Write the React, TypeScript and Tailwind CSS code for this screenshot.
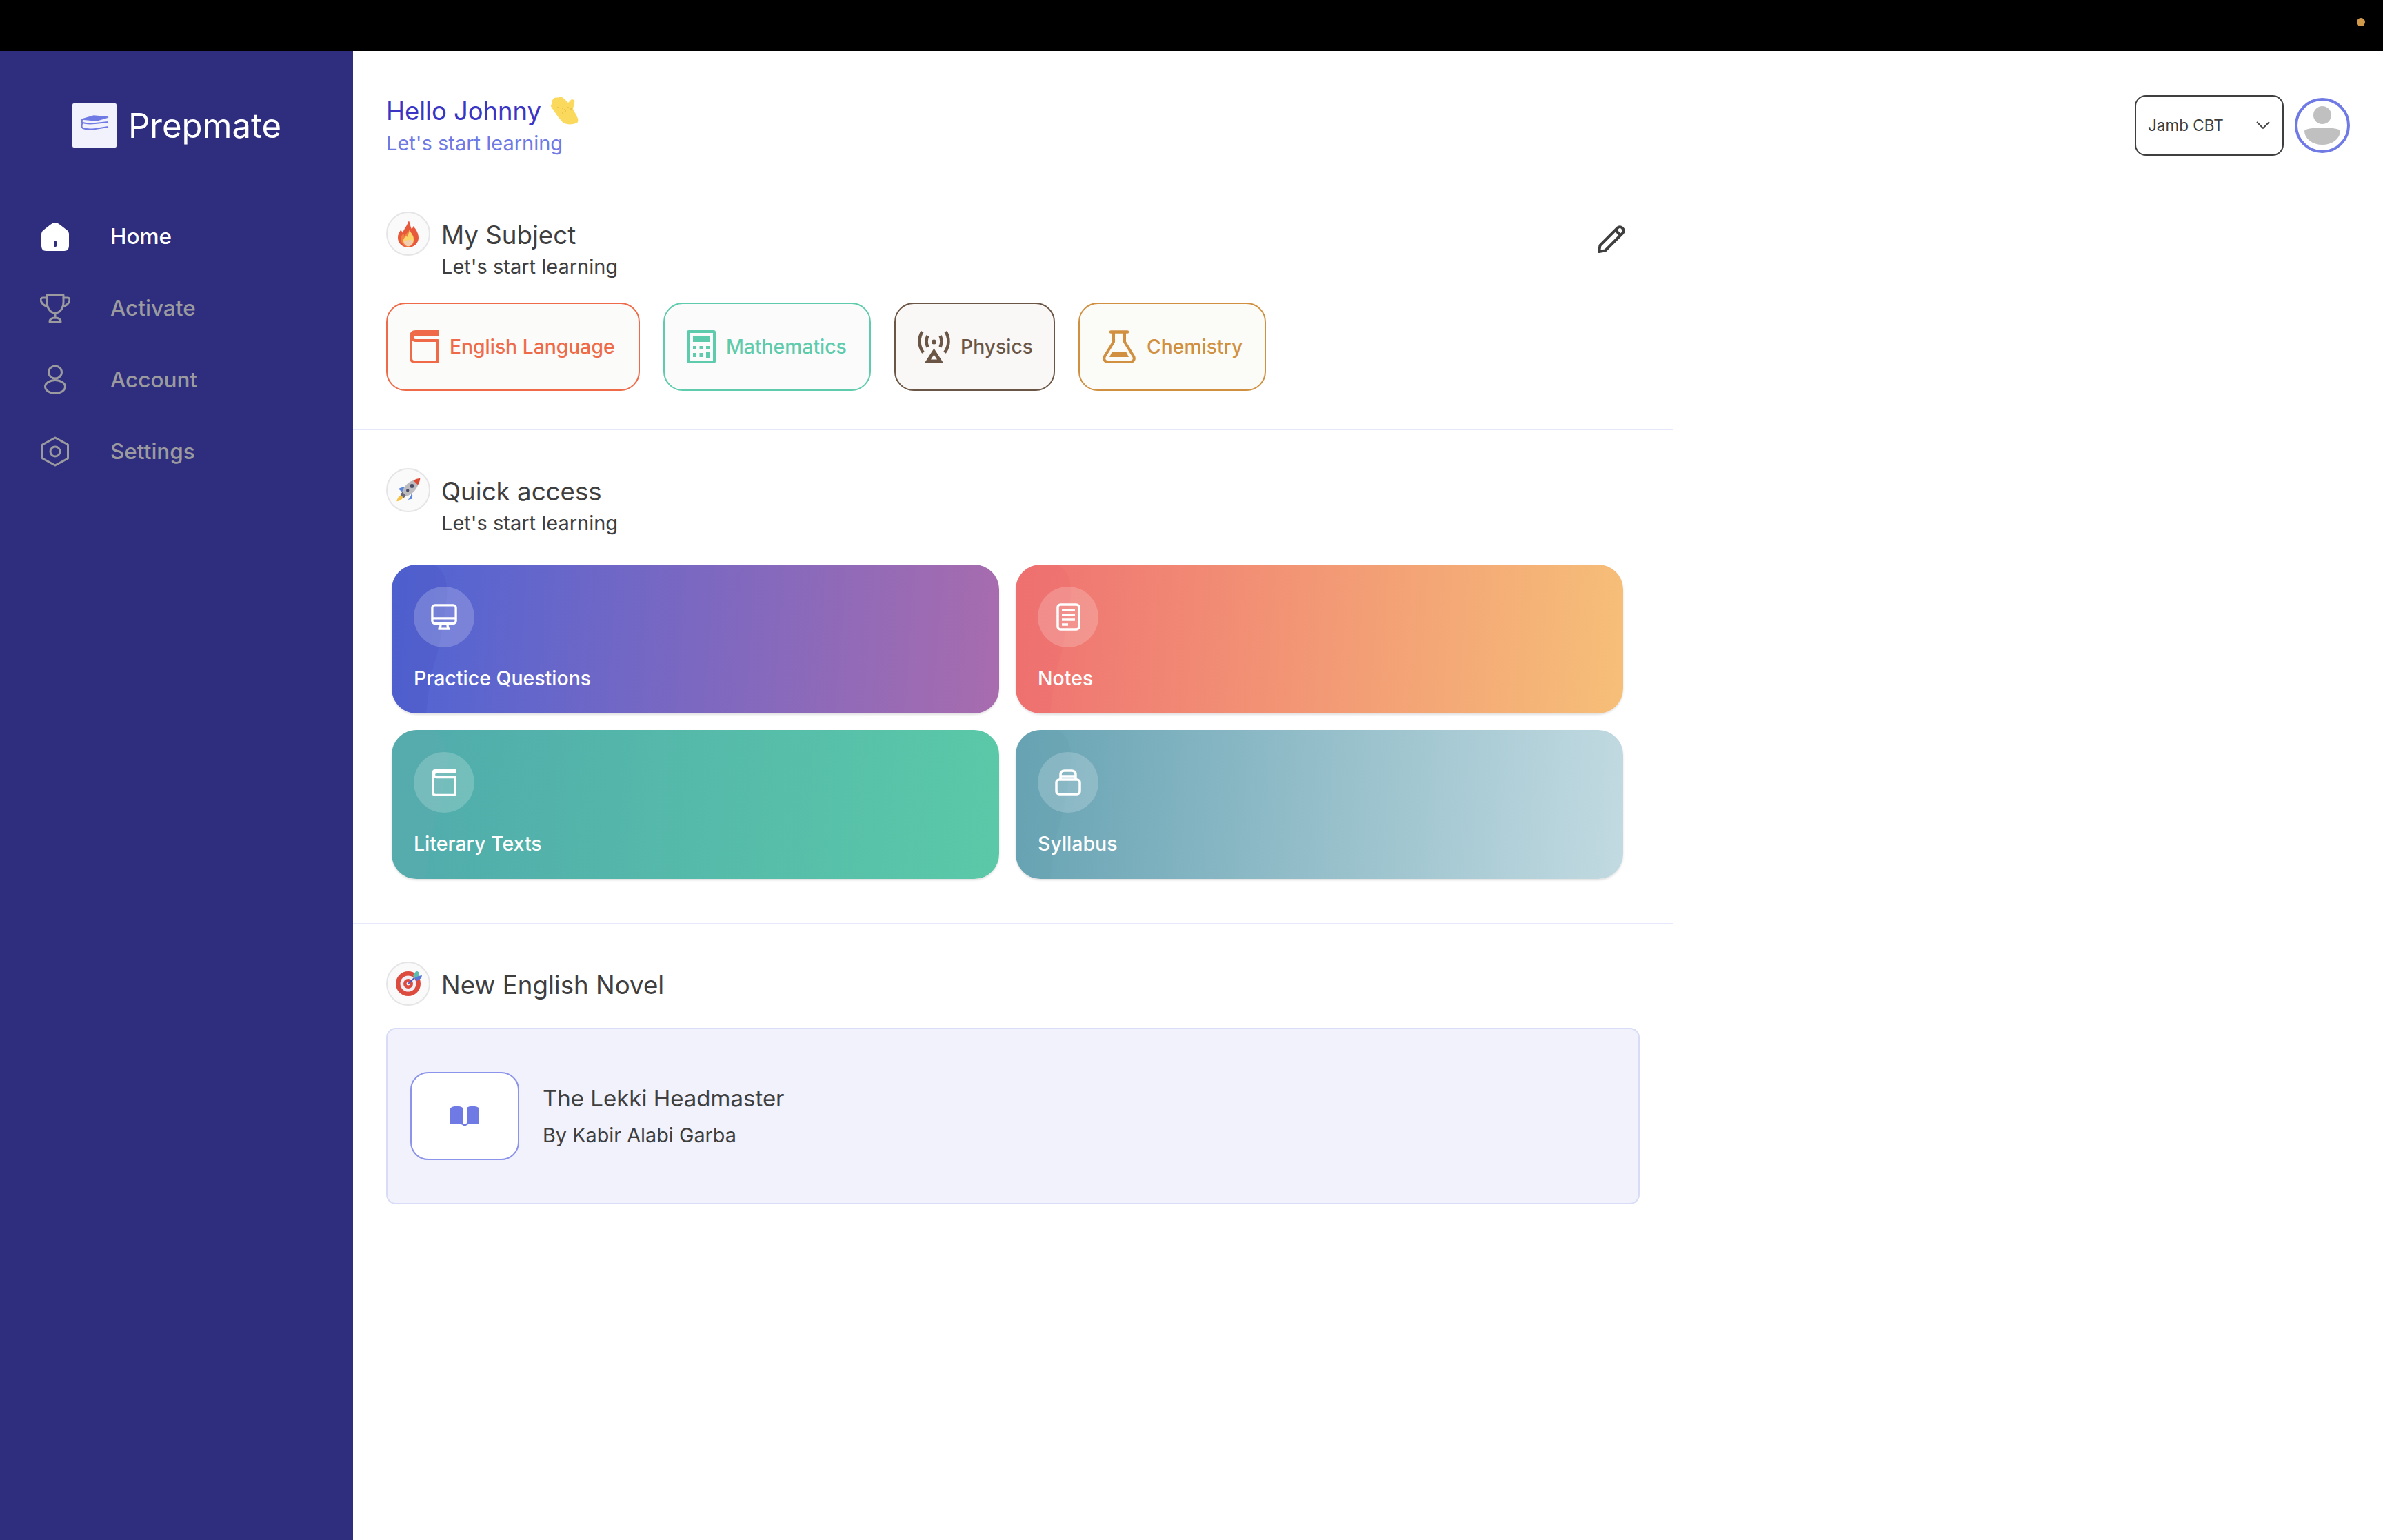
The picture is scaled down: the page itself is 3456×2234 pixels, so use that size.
import React from "react";

function LogoMark() {
  return (
    <svg viewBox="0 0 64 64" className="h-[64px] w-[64px] shrink-0">
      <rect width="64" height="64" rx="2" fill="#f1f2fb" />
      <path d="M14 23l17-5 21 2-17 5z" fill="#6f7ae4" stroke="#6f7ae4" strokeWidth="1.5" />
      <path d="M52 27l-19 2c-6 .6-14 .4-18-1-2-1-2-4 0-5" fill="none" stroke="#6f7ae4" strokeWidth="2" />
      <path d="M52 34l-19 3c-6 .8-14 .4-18-1-2-1-2-5 0-8" fill="none" stroke="#6f7ae4" strokeWidth="2" />
    </svg>
  );
}

function HomeIcon() {
  return (
    <svg viewBox="0 0 40 41" className="h-[41px] w-[40px]">
      <path d="M20 0c3 0 5 1.500 7 3l9 7c3 2 4 4 4 7v16c0 5-2 8-7 8H7c-5 0-7-3-7-8V17c0-3 1-5 4-7l9-7c2-1.500 4-3 7-3z" fill="#fff" />
      <rect x="18" y="26" width="4" height="9" rx="1.500" fill="#2e2d7e" />
    </svg>
  );
}

function TrophyIcon() {
  return (
    <svg viewBox="0 0 44 44" className="h-[44px] w-[44px]" fill="none" stroke="#9a9a9f" strokeWidth="3" strokeLinejoin="round" strokeLinecap="round">
      <path d="M10 3h24v10c0 9-5 16-12 16S10 22 10 13z" />
      <path d="M10 7H4c-2.500 0-3.500 2-2.500 5 1 3.500 4 6 9.500 8" />
      <path d="M34 7h6c2.500 0 3.500 2 2.500 5-1 3.500-4 6-9.500 8" />
      <path d="M22 29v7" />
      <path d="M14 42c0-4 3-6 8-6s8 2 8 6z" />
    </svg>
  );
}

function UserIcon() {
  return (
    <svg viewBox="0 0 44 44" className="h-[44px] w-[44px]" fill="none" stroke="#9a9a9f" strokeWidth="3">
      <ellipse cx="22" cy="11" rx="9.500" ry="9" />
      <ellipse cx="22" cy="32" rx="14.500" ry="9.500" />
    </svg>
  );
}

function HexIcon() {
  return (
    <svg viewBox="0 0 44 44" className="h-[44px] w-[44px]" fill="none" stroke="#9a9a9f" strokeWidth="3" strokeLinejoin="round">
      <path d="M22 2l18.500 10v20L22 42 3.500 32V12z" />
      <circle cx="22" cy="22" r="7" />
    </svg>
  );
}

function BookIcon({ color, className }: { color: string; className: string }) {
  return (
    <svg viewBox="0 0 43 48" className={className} fill="none" stroke={color}>
      <path d="M42 2H9C4 2 2 5 2 9v32c0 3 2 5 5 5h34V15H9C6 15 4 13 4 10.500S6 6 9 6h33" strokeWidth="4" strokeLinejoin="round" />
    </svg>
  );
}

function CalcIcon({ color }: { color: string }) {
  return (
    <svg viewBox="0 0 42 48" className="h-[48px] w-[42px]" fill="none">
      <rect x="2" y="2" width="38" height="44" rx="1" stroke={color} strokeWidth="4" />
      <rect x="9" y="8" width="24" height="9" fill={color} />
      <g fill={color}>
        <rect x="9" y="23" width="5" height="5" />
        <rect x="18.500" y="23" width="5" height="5" />
        <rect x="28" y="23" width="5" height="5" />
        <rect x="9" y="33" width="5" height="6" />
        <rect x="18.500" y="33" width="5" height="6" />
        <rect x="28" y="31" width="5" height="9" />
      </g>
    </svg>
  );
}

function AntennaIcon({ color }: { color: string }) {
  return (
    <svg viewBox="0 0 47 48" className="h-[48px] w-[47px]" fill="none" stroke={color}>
      <circle cx="23.500" cy="17" r="3.500" fill={color} stroke="none" />
      <path d="M14.500 8c-2.500 5-2.500 11 0 16.500M32.500 8c2.500 5 2.500 11 0 16.500" strokeWidth="4.500" />
      <path d="M6.500 2C1 11 1 23 8 32.500M40.500 2C46 11 46 23 39 32.500" strokeWidth="4.500" />
      <path d="M23.500 31L14.500 45h18z" strokeWidth="5" strokeLinejoin="miter" />
    </svg>
  );
}

function FlaskIcon({ color }: { color: string }) {
  return (
    <svg viewBox="0 0 50 48" className="h-[48px] w-[50px]" fill="none">
      <path d="M13 2.500h24" stroke={color} strokeWidth="4.500" strokeLinecap="round" />
      <path d="M17 3v14L4 38c-2 4 0 8 5 8h32c5 0 7-4 5-8L33 17V3" stroke={color} strokeWidth="4" strokeLinejoin="round" />
      <path d="M15 31h20l4 8H11z" fill={color} />
    </svg>
  );
}

function PencilIcon() {
  return (
    <svg viewBox="0 0 40 40" className="h-[40px] w-[40px]" fill="none" stroke="#3f3f3f" strokeWidth="4" strokeLinejoin="round">
      <path d="M29 3.500c2-2 5-1.500 7 .5s2.500 5 .5 7L11 36.500 2 38l1.500-9z" />
      <path d="M26 7l7.500 7.500" />
    </svg>
  );
}

function WaveHand() {
  return (
    <svg viewBox="9 13 42 42" className="h-[42px] w-[42px]">
      <path d="M14 15c3-1 5 0 7-1 3-1 5 0 8 3l5 5c2-2 3-3 5-5 3 0 5 2 4 5l-2 9c2 4 5 9 7 14 1 4 0 6-3 7-6 2-13 2-18-1-5-4-12-15-17-22-2-3-2-4 1-5-2-3-1-5 3-9z" fill="#fbd95c" />
      <g fill="#d8a83a">
        <circle cx="19" cy="29" r="0.800" />
        <circle cx="26" cy="30" r="0.800" />
        <circle cx="29" cy="32" r="0.800" />
        <circle cx="34" cy="29" r="0.800" />
        <circle cx="38" cy="31" r="0.800" />
        <circle cx="30" cy="34" r="0.800" />
        <circle cx="26" cy="37" r="0.800" />
      </g>
    </svg>
  );
}

function FireEmoji() {
  return (
    <svg viewBox="3 0 34 44" className="h-[39px] w-[30px]">
      <path d="M21 0c3 6 2 10 5 14 1-1 2-3 2-5 5 5 9 12 9 19 0 9-7 16-17 16S3 37 3 28c0-5 2-9 5-13 1 2 2 4 3 5 2-6 7-11 10-20z" fill="#e8583a" />
      <path d="M8 30c0-4 2-7 4-9l2 4c2-3 5-5 6-8 3 4 10 7 10 14 0 7-5 12-11 12S8 37 8 30z" fill="#f08143" />
      <path d="M22 15c2 5 7 9 7 16 0 6-4 10-9 10s-8-4-8-8c0-4 3-6 5-8l2 2c1-3 2-7 3-12z" fill="#fbd46b" />
      <path d="M13 34c2-2 13-3 15-1 0 5-3 9-8 9s-7-4-7-8z" fill="#f2cdb0" />
    </svg>
  );
}

function RocketEmoji() {
  return (
    <svg viewBox="55 60 115 115" className="h-[38px] w-[38px]">
      <path d="M62 167c2-12 8-22 18-28l10 11c-6 10-16 15-28 17z" fill="#f6c344" />
      <path d="M70 112c8-6 18-9 28-7l-10 22zM110 160c8-6 15-14 16-26l6 8-4 14z" fill="#5b86e0" />
      <path d="M78 136l10-12 16 18-12 10z" fill="#6a6a78" />
      <path d="M86 124c8-24 28-44 50-50l20 20c-8 22-26 42-50 50z" fill="#bcbcc0" />
      <path d="M135 75c10-6 20-9 30-10-1 10-4 20-10 30z" fill="#dc4a34" />
      <circle cx="129" cy="99" r="9" fill="#4d4d6a" />
      <circle cx="110" cy="119" r="6.500" fill="#4d4d6a" />
    </svg>
  );
}

function TargetEmoji() {
  return (
    <svg viewBox="0 3 36 36" className="h-[36px] w-[36px] overflow-visible">
      <circle cx="18" cy="21" r="18" fill="#dd4b3e" />
      <circle cx="18" cy="21" r="11.500" fill="#f1f0f6" />
      <circle cx="18" cy="21" r="7" fill="#dd4b3e" />
      <circle cx="18" cy="21" r="2.500" fill="#f1f0f6" />
      <path d="M18 21L32 8" stroke="#4a5bc8" strokeWidth="1.800" />
      <path d="M25 9l5-7 4 3-1 6-6 3z" fill="#5cbdb0" />
      <path d="M27 13l6-3 5-1-1 4-6 4z" fill="#5a74d8" />
    </svg>
  );
}

function EmojiBadge({ children }: { children: React.ReactNode }) {
  return (
    <div className="flex h-[64px] w-[64px] shrink-0 items-center justify-center rounded-full border-2 border-[#e5e5e7] bg-[#fafafa]">
      {children}
    </div>
  );
}

function SectionHead({ icon, title, sub }: { icon: React.ReactNode; title: string; sub?: string }) {
  return (
    <div className="flex gap-[16px]">
      <EmojiBadge>{icon}</EmojiBadge>
      <div className="pt-[12px]">
        <div className="text-[36.7px] leading-[44px] text-[#3f3f3f]">{title}</div>
        {sub && <div className="mt-[5px] text-[29px] leading-[38px] text-[#3f3f3f]">{sub}</div>}
      </div>
    </div>
  );
}

const navItems = [
  { label: "Home", icon: <HomeIcon />, active: true },
  { label: "Activate", icon: <TrophyIcon /> },
  { label: "Account", icon: <UserIcon /> },
  { label: "Settings", icon: <HexIcon /> },
];

function Sidebar() {
  return (
    <aside className="w-[512px] shrink-0 bg-[#2e2d7e]">
      <div className="flex items-center gap-[17px] pl-[105px] pt-[76px]">
        <LogoMark />
        <span className="pt-[2px] text-[49px] leading-[62px] text-white">Prepmate</span>
      </div>
      <nav className="mt-[105px] flex flex-col gap-[56px] pl-[58px]">
        {navItems.map((item) => (
          <div key={item.label} className="flex h-[48px] items-center gap-[58px]">
            <div className="flex w-[44px] justify-center">{item.icon}</div>
            <span className={item.active ? "text-[31.5px] font-medium text-white" : "text-[31.5px] font-medium text-[#9a9a9f]"}>
              {item.label}
            </span>
          </div>
        ))}
      </nav>
    </aside>
  );
}

const subjects = [
  { label: "English Language", cls: "w-[368px] border-[#ee6a48] text-[#ee6a48] bg-[#fbfbf9]", icon: <BookIcon color="#ee6a48" className="h-[48px] w-[43px]" /> },
  { label: "Mathematics", cls: "w-[301px] border-[#5ecbac] text-[#5ecbac] bg-[#fafbfa]", icon: <CalcIcon color="#5ecbac" /> },
  { label: "Physics", cls: "w-[233px] border-[#6b5646] text-[#6b5646] bg-[#f9f8f7]", icon: <AntennaIcon color="#6b5646" /> },
  { label: "Chemistry", cls: "w-[272px] border-[#d09040] text-[#d09040] bg-[#fbfbf8]", icon: <FlaskIcon color="#d09040" /> },
];

const cards = [
  {
    label: "Practice Questions",
    cls: "bg-[linear-gradient(94deg,#4f64d4_0%,#a86cae_100%)]",
    blob: "#4a55c4",
    icon: (
      <svg viewBox="0 0 40 40" className="h-[38px] w-[38px]" fill="none" stroke="#fff" strokeWidth="3.500" strokeLinejoin="round">
        <rect x="2" y="2" width="36" height="28" rx="4" />
        <path d="M2 22h36M15 30l-1 8M25 30l1 8" />
        <path d="M11 38h18" />
      </svg>
    ),
  },
  {
    label: "Notes",
    cls: "bg-[linear-gradient(94deg,#ef7272_0%,#f6bf78_100%)]",
    blob: "#ee6c6c",
    icon: (
      <svg viewBox="0 0 35 40" className="h-[40px] w-[35px]" fill="none" stroke="#fff" strokeWidth="3.500">
        <rect x="2" y="2" width="31" height="36" rx="4" />
        <path d="M8 10h19M8 17h19M8 24h19M8 31h9" />
      </svg>
    ),
  },
  {
    label: "Literary Texts",
    cls: "bg-[linear-gradient(94deg,#50abac_0%,#5bc9a8_100%)]",
    blob: "#62adae",
    icon: <BookIcon color="#fff" className="h-[40px] w-[38px]" />,
  },
  {
    label: "Syllabus",
    cls: "bg-[linear-gradient(94deg,#67a3b3_0%,#c2dae1_100%)]",
    blob: "#67a3b3",
    icon: (
      <svg viewBox="0 0 38 38" className="h-[38px] w-[38px]" fill="none" stroke="#fff" strokeWidth="3.500" strokeLinejoin="round">
        <rect x="2" y="15" width="34" height="21" rx="4" />
        <path d="M8 15V8c0-4 2-6 6-6h10c4 0 6 2 6 6v7" />
        <path d="M8 10h22" />
      </svg>
    ),
  },
];

function QuickCard({ label, cls, blob, icon }: (typeof cards)[number]) {
  return (
    <div className={`relative flex h-[216px] flex-col justify-between overflow-hidden rounded-[36px] pb-[33px] pl-[32px] pt-[32px] shadow-[0_2px_3px_rgba(0,0,0,0.12)] ${cls}`}>
      <svg viewBox="0 0 84 216" className="absolute left-0 top-0 h-[216px] w-[84px]" aria-hidden="true">
        <path d="M0 0h60c18 8 24 30 18 60-4 30-8 60-18 90-6 24-8 50-10 66H0z" fill={blob} opacity="0.35" />
      </svg>
      <div className="relative flex h-[88px] w-[88px] items-center justify-center rounded-full bg-white/20">{icon}</div>
      <span className="relative text-[28.5px] font-medium leading-[36px] text-white">{label}</span>
    </div>
  );
}

export default function App() {
  return (
    <div className="flex h-[2234px] w-[3456px] flex-col overflow-hidden bg-white font-['Inter',sans-serif]">
      <div className="flex h-[74px] shrink-0 items-center justify-end bg-black pb-[10px] pr-[26px]">
        <div className="h-[12px] w-[12px] rounded-full bg-[#d09a4a]" />
      </div>
      <div className="flex flex-1">
        <Sidebar />
        <main className="flex-1">
          <header className="flex items-start justify-between pl-[48px] pr-[48px] pt-[64px]">
            <div className="pt-px">
              <div className="flex items-center gap-[14px]">
                <span className="text-[36.4px] leading-[44px] text-[#3b35c3]">Hello Johnny</span>
                <WaveHand />
              </div>
              <div className="mt-[6px] text-[29px] leading-[38px] text-[#6f7ae4]">Let's start learning</div>
            </div>
            <div className="flex items-center gap-[16px]">
              <div className="flex h-[88px] w-[216px] items-center justify-between rounded-[16px] border-2 border-[#3f3f3f] pl-[17px] pr-[18px] text-[22.5px] text-[#3f3f3f]">
                <span>Jamb CBT</span>
                <svg viewBox="0 0 20 12" className="h-[12px] w-[20px]" fill="none" stroke="#3f3f3f" strokeWidth="1.800">
                  <path d="M1 1l9 9 9-9" />
                </svg>
              </div>
              <div className="flex h-[80px] w-[80px] flex-col items-center overflow-hidden rounded-full border-4 border-[#6f7ae4] bg-white pt-[8px]">
                <div className="h-[26px] w-[26px] rounded-full bg-[#c0c0c0]" />
                <div className="mt-[5px] h-[25px] w-[52px] rounded-[50%_50%_50%_50%/20%_20%_80%_80%] bg-[#c0c0c0]" />
              </div>
            </div>
          </header>

          <div className="w-[1914px]">
            <section className="border-b-2 border-[#e6e8fb] pb-[55px] pl-[48px] pt-[80px]">
              <div className="flex items-start justify-between pr-[69px]">
                <SectionHead icon={<FireEmoji />} title="My Subject" sub="Let's start learning" />
                <div className="mt-[20px]">
                  <PencilIcon />
                </div>
              </div>
              <div className="mt-[33px] flex gap-[34px]">
                {subjects.map((s) => (
                  <div key={s.label} className={`flex h-[128px] items-center gap-[15px] rounded-[28px] border-2 pl-[32px] ${s.cls}`}>
                    {s.icon}
                    <span className="whitespace-nowrap text-[28.3px] font-medium leading-none">{s.label}</span>
                  </div>
                ))}
              </div>
            </section>

            <section className="border-b-2 border-[#e6e8fb] pb-[64px] pl-[48px] pt-[55px]">
              <SectionHead icon={<RocketEmoji />} title="Quick access" sub="Let's start learning" />
              <div className="ml-[8px] mt-[41px] grid w-[1786px] grid-cols-2 gap-[24px]">
                {cards.map((c) => (
                  <QuickCard key={c.label} {...c} />
                ))}
              </div>
            </section>

            <section className="pl-[48px] pt-[54px]">
              <SectionHead icon={<TargetEmoji />} title="New English Novel" />
              <div className="mt-[32px] flex h-[256px] w-[1818px] items-center gap-[34px] rounded-[14px] border-2 border-[#d8dcf6] bg-[#f1f2fb] pl-[33px]">
                <div className="flex h-[128px] w-[158px] items-center justify-center rounded-[26px] border-2 border-[#8b93ea] bg-white">
                  <svg viewBox="0 0 42 30" className="h-[30px] w-[42px]">
                    <path d="M0 4C3 0 14 0 18 3V24c0 2 1 3 3 3s3-1 3-3V3C28 0 39 0 42 4V27c-5-1.500-12-1.500-17 .5l-4 2.500-4-2.500c-5-2-12-2-17-.5z" fill="#6f7ae4" />
                  </svg>
                </div>
                <div>
                  <div className="text-[33px] leading-[42px] text-[#3f3f3f]">The Lekki Headmaster</div>
                  <div className="mt-[14px] text-[28.8px] leading-[38px] text-[#3f3f3f]">By Kabir Alabi Garba</div>
                </div>
              </div>
            </section>
          </div>
        </main>
      </div>
    </div>
  );
}
